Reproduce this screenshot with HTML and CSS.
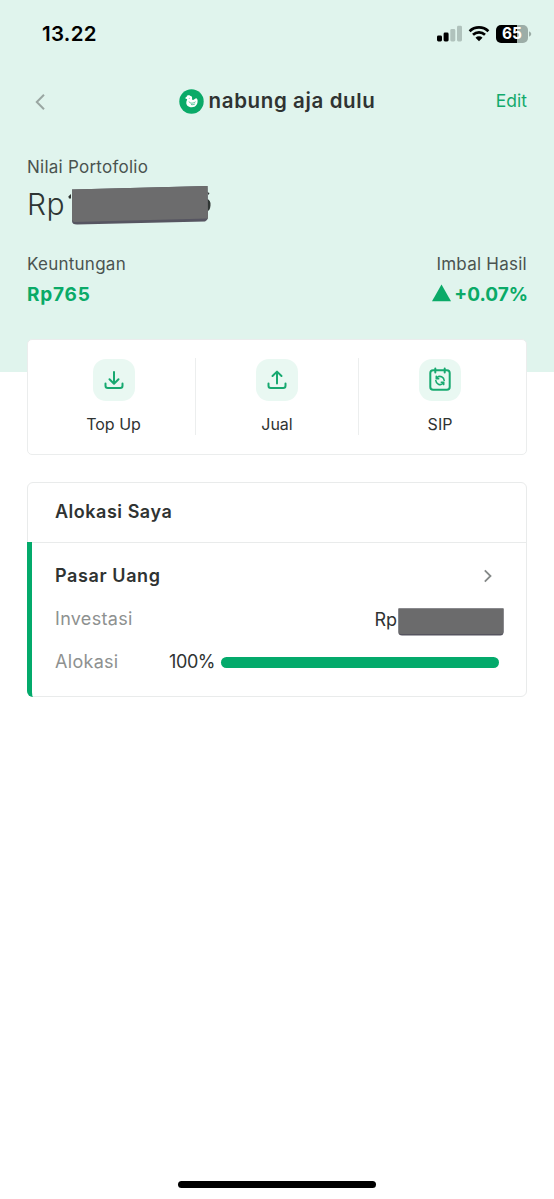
FILE: index.html
```html
<!DOCTYPE html>
<html lang="id">
<head>
<meta charset="utf-8">
<title>nabung aja dulu</title>
<link rel="stylesheet" href="styles.css">
</head>
<body>
<div class="screen">
  <header class="hero">
    <div class="status">
      <span class="time">13.22</span>
      <div class="indicators">
        <svg class="signal" width="26" height="17" viewBox="0 0 26 17">
          <rect x="0" y="10.5" width="5" height="6" rx="1.4"/>
          <rect x="6.6" y="7.5" width="5" height="9" rx="1.4"/>
          <rect class="dim" x="13.3" y="4" width="5" height="12.5" rx="1.4"/>
          <rect class="dim" x="20" y="0.8" width="5" height="15.7" rx="1.4"/>
        </svg>
        <svg class="wifi" width="22" height="17" viewBox="0 0 22 17">
          <path class="arc" d="M1.6 6.2a13.6 13.6 0 0 1 18.8 0M5 9.8a8.8 8.8 0 0 1 12 0"/>
          <path d="M7.5 12.7a5 5 0 0 1 7 0L11 16.2z"/>
        </svg>
        <div class="battery"><span>65</span></div>
        <svg class="cap" width="3" height="6" viewBox="0 0 3 6"><path d="M0 0.3Q2.3 1.2 2.3 3T0 5.7z"/></svg>
      </div>
    </div>
    <nav class="nav">
      <svg class="back" width="14" height="18" viewBox="0 0 14 18"><path d="M11 1.8 3.8 9l7.2 7.2"/></svg>
      <div class="title">
        <svg width="25" height="25" viewBox="0 0 25 25">
          <circle cx="12.5" cy="12.5" r="12.2" fill="#0aaa68"/>
          <path fill="#fff" d="M6.300 9.400C6.400 8.300 7.100 7.900 7.800 7.800 7.600 6.700 8.300 6.300 9 6.600c.5-.8 1.600-.7 1.900.1 1.600 0 2.400 1.200 2.200 2.600-.1 1 .1 1.600.7 1.600 1.500-.1 2.400-1.400 3.700-1.900.1.900.3 1.200 1 1.500.6 4.600-1.600 7.700-5.700 7.700-4 0-6-2.400-5.400-5.500.2-1 .7-1.600.7-2.500-.6-.5-1.200-.6-1.800-.8z"/>
          <path fill="none" stroke="#0aaa68" stroke-width=".7" stroke-linecap="round" d="M10.200 13c.6 1.500 3.800 1.800 6 0M12.400 15.600c1.400.3 2.400.1 3.400-.6"/>
          <circle cx="10.200" cy="9.200" r=".45" fill="#0aaa68"/>
        </svg>
        <h1>nabung aja dulu</h1>
      </div>
      <span class="edit">Edit</span>
    </nav>
    <section class="summary">
      <div class="label nilai">Nilai Portofolio</div>
      <div class="total"><span>Rp</span>
        <svg width="146" height="42" viewBox="0 0 146 42">
          <path fill="#303634" d="M.3 13.500 3 11v4.500H1zM139 9l2.500 1-1 2zM139 16q4 1 3.500 6.500T139 28z"/>
          <path fill="#565561" d="M4 6.500 139.500 3l.5 32q-1 3-3 3.500L9 41.500Q4 41.500 4 38z"/>
          <path fill="#6c6c6d" d="M4 6.500 139.500 3 140 35.500 6 39 4 37z"/>
        </svg>
      </div>
      <div class="row label returns"><span class="keu">Keuntungan</span><span class="imb">Imbal Hasil</span></div>
      <div class="row value">
        <span class="gain">Rp765</span>
        <div class="pct"><svg width="19" height="18" viewBox="0 0 19 18"><path d="M9.500 .5 19 17.200H0z"/></svg><span>+0.07%</span></div>
      </div>
    </section>
  </header>

  <section class="actions">
    <div class="action">
      <div class="tile"><svg viewBox="0 0 42 42"><path d="M21 13v11.500M16.500 20.300l4.500 4.400 4.500-4.400M12.500 24.500v2.200q0 2.300 2.300 2.300h12.400q2.300 0 2.300-2.300v-2.200"/></svg></div>
      <span class="a1">Top Up</span>
    </div>
    <div class="action">
      <div class="tile"><svg viewBox="0 0 42 42"><path d="M21 24.500V13M16.500 17l4.500-4.400 4.500 4.400M12.500 24.500v2.200q0 2.300 2.300 2.300h12.400q2.300 0 2.300-2.300v-2.200"/></svg></div>
      <span class="a2">Jual</span>
    </div>
    <div class="action">
      <div class="tile"><svg viewBox="0 0 42 42"><rect x="11.300" y="11.300" width="19.400" height="19.400" rx="2.800"/><path d="M16.300 9.500v4M25.700 9.500v4"/><path class="fine" d="M18.200 18.300a4.400 4.400 0 0 1 7 3.200M23.800 24.700a4.400 4.400 0 0 1-7-3.200M17.300 17.400v2.300h2.400M24.700 25.600v-2.300h-2.400"/></svg></div>
      <span class="a3">SIP</span>
    </div>
  </section>

  <section class="allocation">
    <h2>Alokasi Saya</h2>
    <div class="fund">
      <div class="row name"><h3>Pasar Uang</h3><svg width="10" height="14" viewBox="0 0 10 14"><path d="M1.800 1.300 7.500 7l-5.700 5.700"/></svg></div>
      <div class="row invest"><span class="muted inv">Investasi</span>
        <div class="amount"><span>Rp</span><svg width="106" height="28" viewBox="0 0 106 28"><path fill="#55545e" d="M.5.500h105V25q-.5 2.500-3 2.500H4Q.5 27 .5 25z"/><path fill="#6b6b6c" d="M.5.500h105V24q-.5 2-2 2L2.500 26Q.5 26 .5 24z"/></svg></div>
      </div>
      <div class="row share"><span class="muted alo">Alokasi</span><span class="percent">100%</span><div class="track"><div class="fill" style="width:100%"></div></div></div>
    </div>
  </section>
  <div class="home"></div>
</div>
</body>
</html>
```
FILE: styles.css
```css
* { box-sizing: border-box; }
body { margin: 0; background: #fff; font-family: Inter, "Liberation Sans", sans-serif; color: #2f3332; }
h1, h2, h3 { margin: 0; }
span, h1, h2, h3, .label { white-space: nowrap; }
.screen { width: 554px; height: 1199px; display: flex; flex-direction: column; overflow: hidden; }
.row { display: flex; justify-content: space-between; align-items: center; }

.hero { height: 372px; flex: none; background: #e0f4ed; }
.status { height: 67px; display: flex; justify-content: space-between; align-items: center; padding: 0 22px 0 42px; }
.time { font-size: 20.500px; font-weight: 600; color: #000; letter-spacing: .3px; }
.indicators { display: flex; align-items: center; }
.signal { margin-right: 5px; }
.signal .dim { fill: #b0c2bc; }
.wifi { margin-right: 6px; }
.wifi .arc { fill: none; stroke: #000; stroke-width: 2.700; }
.battery { width: 32px; height: 18px; border-radius: 5px; background: linear-gradient(90deg, #000 65%, #9cada7 65%); color: #fff; font-size: 15.500px; font-weight: 700; line-height: 18px; text-align: center; }
.cap { margin-left: 1px; fill: #9cada7; }

.nav { height: 68px; display: grid; grid-template-columns: 60px 1fr 60px; align-items: center; padding: 0 27px; }
.back { margin: 1px 0 0 6px; fill: none; stroke: #9aa6a2; stroke-width: 2; }
.title { display: flex; align-items: center; justify-content: center; gap: 5px; }
h1 { font-size: 20.500px; line-height: 24px; font-weight: 600; letter-spacing: .620px; }
.edit { font-size: 17.500px; line-height: 24px; color: #12aa6c; text-align: right; }

.summary { padding: 21px 27px 0; }
.label { height: 23px; line-height: 23px; font-size: 17px; font-weight: 400; letter-spacing: .250px; color: #4a5350; }
.total { height: 50px; display: flex; align-items: center; font-size: 30px; font-weight: 300; letter-spacing: .400px; color: #2f3634; }
.total svg { margin-left: 3px; overflow: visible; }
.returns { margin-top: 24px; }
.value { height: 36px; font-size: 19px; font-weight: 700; color: #0aaa68; }
.gain { letter-spacing: .800px; }
.pct { display: flex; align-items: center; gap: 3px; margin-right: -1px; }
.pct svg { fill: #0aaa68; margin-top: -3px; }

.actions { height: 116px; flex: none; margin: -33px 27px 27px; display: grid; grid-template-columns: 1fr 1fr 1fr; padding: 18px 5px 18px 4px; background: #fff; border: 1px solid #ebeded; border-radius: 5px; }
.action { height: 77px; display: flex; flex-direction: column; align-items: center; padding-top: 1px; }
.action + .action { border-left: 1px solid #eceeee; }
.tile { width: 42px; height: 42px; border-radius: 13px; background: #e9f8f2; }
.tile svg { display: block; width: 42px; height: 42px; fill: none; stroke: #17a970; stroke-width: 2; stroke-linecap: round; stroke-linejoin: round; }
.tile .fine { stroke-width: 1.600; }
.action span { margin-top: 11px; line-height: 24px; font-size: 16px; font-weight: 400; }

.allocation { height: 215px; flex: none; margin: 0 27px; border: 1px solid #e9ebeb; border-radius: 6px; }
h2 { height: 60px; line-height: 58px; padding-left: 27px; font-size: 18px; font-weight: 600; letter-spacing: .520px; border-bottom: 1px solid #e9ebeb; }
.fund { height: 155px; margin: -1px 0 0 -1px; border-left: 5px solid #03aa6b; border-radius: 0 0 0 6px; padding: 12px 22px 0 23px; }
.fund .row { height: 43px; font-size: 18px; }
h3 { font-size: 18px; font-weight: 600; letter-spacing: .600px; }
.name svg { margin: 1px 11px 0 0; fill: none; stroke: #858988; stroke-width: 1.800; }
.muted { color: #8e9190; font-weight: 400; letter-spacing: .300px; }
.amount { display: flex; align-items: center; gap: 1px; margin-top: 2px; font-weight: 400; }
.amount svg { margin-top: 5px; }
.share .alo { width: 114px; }
.percent { width: 52px; font-weight: 400; letter-spacing: -.400px; }
.track { flex: 1; height: 11px; margin: 2px 5px 0 0; border-radius: 6px; background: #e6f6ef; }
.fill { height: 100%; border-radius: 6px; background: #03aa6b; }

.home { width: 198px; height: 7px; flex: none; margin: 484px auto 0; border-radius: 4px; background: #000; }
```
